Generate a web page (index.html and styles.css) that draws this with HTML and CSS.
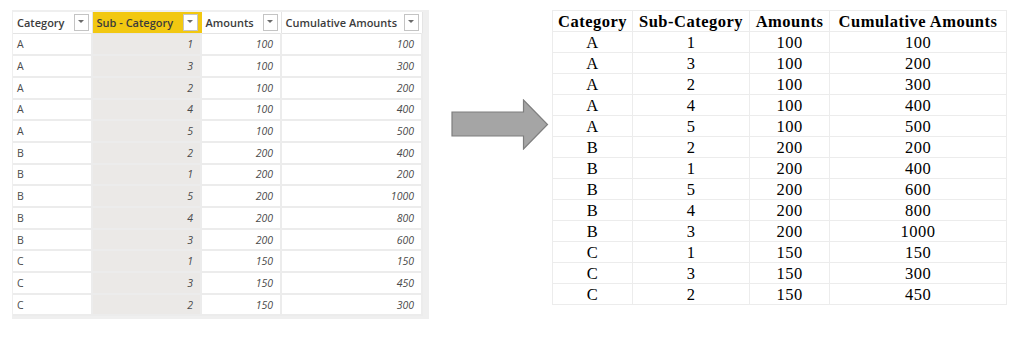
FILE: index.html
```html
<!DOCTYPE html>
<html>
<head>
<meta charset="utf-8">
<link rel="stylesheet" href="styles.css">
</head>
<body>
<div class="page">
  <div class="pbi-frame">
    <table class="pbi">
      <colgroup><col class="c1"><col class="c2"><col class="c3"><col class="c4"></colgroup>
      <thead>
        <tr>
          <th><div class="hd"><span>Category</span><span class="dd"></span></div></th>
          <th class="sel"><div class="hd"><span>Sub - Category</span><span class="dd"></span></div></th>
          <th><div class="hd"><span>Amounts</span><span class="dd"></span></div></th>
          <th><div class="hd"><span>Cumulative Amounts</span><span class="dd"></span></div></th>
        </tr>
      </thead>
      <tbody>
        <tr><td>A</td><td class="n s">1</td><td class="n">100</td><td class="n">100</td></tr>
        <tr><td>A</td><td class="n s">3</td><td class="n">100</td><td class="n">300</td></tr>
        <tr><td>A</td><td class="n s">2</td><td class="n">100</td><td class="n">200</td></tr>
        <tr><td>A</td><td class="n s">4</td><td class="n">100</td><td class="n">400</td></tr>
        <tr><td>A</td><td class="n s">5</td><td class="n">100</td><td class="n">500</td></tr>
        <tr><td>B</td><td class="n s">2</td><td class="n">200</td><td class="n">400</td></tr>
        <tr><td>B</td><td class="n s">1</td><td class="n">200</td><td class="n">200</td></tr>
        <tr><td>B</td><td class="n s">5</td><td class="n">200</td><td class="n">1000</td></tr>
        <tr><td>B</td><td class="n s">4</td><td class="n">200</td><td class="n">800</td></tr>
        <tr><td>B</td><td class="n s">3</td><td class="n">200</td><td class="n">600</td></tr>
        <tr><td>C</td><td class="n s">1</td><td class="n">150</td><td class="n">150</td></tr>
        <tr><td>C</td><td class="n s">3</td><td class="n">150</td><td class="n">450</td></tr>
        <tr><td>C</td><td class="n s">2</td><td class="n">150</td><td class="n">300</td></tr>
      </tbody>
    </table>
  </div>

  <svg class="arrow" width="98" height="51" viewBox="0 0 98 51">
    <polygon points="1,13 72.5,13 72.5,1 96.5,25.5 72.5,50 72.5,37 1,37" fill="#a5a5a5" stroke="#7e7e7e" stroke-width="1.2"/>
  </svg>

  <table class="xl">
    <colgroup><col class="x1"><col class="x2"><col class="x3"><col class="x4"></colgroup>
    <thead>
      <tr><th>Category</th><th>Sub-Category</th><th>Amounts</th><th>Cumulative Amounts</th></tr>
    </thead>
    <tbody>
      <tr><td>A</td><td>1</td><td>100</td><td>100</td></tr>
      <tr><td>A</td><td>3</td><td>100</td><td>200</td></tr>
      <tr><td>A</td><td>2</td><td>100</td><td>300</td></tr>
      <tr><td>A</td><td>4</td><td>100</td><td>400</td></tr>
      <tr><td>A</td><td>5</td><td>100</td><td>500</td></tr>
      <tr><td>B</td><td>2</td><td>200</td><td>200</td></tr>
      <tr><td>B</td><td>1</td><td>200</td><td>400</td></tr>
      <tr><td>B</td><td>5</td><td>200</td><td>600</td></tr>
      <tr><td>B</td><td>4</td><td>200</td><td>800</td></tr>
      <tr><td>B</td><td>3</td><td>200</td><td>1000</td></tr>
      <tr><td>C</td><td>1</td><td>150</td><td>150</td></tr>
      <tr><td>C</td><td>3</td><td>150</td><td>300</td></tr>
      <tr><td>C</td><td>2</td><td>150</td><td>450</td></tr>
    </tbody>
  </table>
</div>
</body>
</html>
```

FILE: styles.css
```css
html, body {
  margin: 0;
  padding: 0;
  background: #ffffff;
}

.page {
  display: flex;
  align-items: flex-start;
  width: 1035px;
  height: 349px;
}

/* ---------- Power BI style grid ---------- */
.pbi-frame {
  margin-left: 12px;
  margin-top: 10px;
  padding: 2px 6px 3px 1px;
  background: #efefef;
}

.pbi {
  border-collapse: collapse;
  table-layout: fixed;
  width: 409px;
  font-family: "Open Sans", "Noto Sans", sans-serif;
  font-size: 10.5px;
  color: #4a4a4a;
}

.pbi .c1 { width: 79px; }
.pbi .c2 { width: 109px; }
.pbi .c3 { width: 80px; }
.pbi .c4 { width: 141px; }

.pbi th {
  height: 21px;
  padding: 0;
  background: #ffffff;
  border-right: 1px solid #e4e4e4;
  border-bottom: 1px solid #e4e4e4;
  font-weight: 600;
  font-size: 11px;
  color: #3c3c3c;
  text-align: left;
}

.pbi th.sel {
  background: #f2c811;
  border-right-color: #f2c811;
}

.hd {
  display: flex;
  align-items: center;
  justify-content: space-between;
  padding: 0 3px 0 4px;
}

.dd {
  position: relative;
  width: 15px;
  height: 17px;
  border: 1px solid #c4c4c4;
  background: #ffffff;
  box-sizing: border-box;
}

.dd::after {
  content: "";
  position: absolute;
  left: 3.5px;
  top: 5px;
  border-left: 3px solid transparent;
  border-right: 3px solid transparent;
  border-top: 3px solid #6a6a6a;
}

.pbi td {
  height: 21.7px;
  padding: 0 5px 0 4px;
  box-sizing: border-box;
  background: #ffffff;
  border-right: 2px solid #ececec;
  border-bottom: 2px solid #ececec;
  white-space: nowrap;
}

.pbi td.n {
  text-align: right;
  font-style: italic;
  padding-right: 7px;
}

.pbi td.s {
  background: #ebe9e7;
}

/* ---------- arrow ---------- */
.arrow {
  margin-left: 22px;
  margin-top: 99px;
  flex: none;
}

/* ---------- Excel style table ---------- */
.xl {
  margin-left: 3px;
  margin-top: 10px;
  border-collapse: collapse;
  table-layout: fixed;
  width: 454px;
  font-family: "Liberation Serif", "DejaVu Serif", serif;
  font-size: 16.5px;
  letter-spacing: 0.5px;
  color: #000000;
}

.xl .x1 { width: 80px; }
.xl .x2 { width: 117px; }
.xl .x3 { width: 80px; }
.xl .x4 { width: 177px; }

.xl th, .xl td {
  height: 21px;
  padding: 0;
  box-sizing: border-box;
  border: 1px solid #ececec;
  text-align: center;
  white-space: nowrap;
  line-height: 19px;
}

.xl th {
  font-weight: bold;
}
```
